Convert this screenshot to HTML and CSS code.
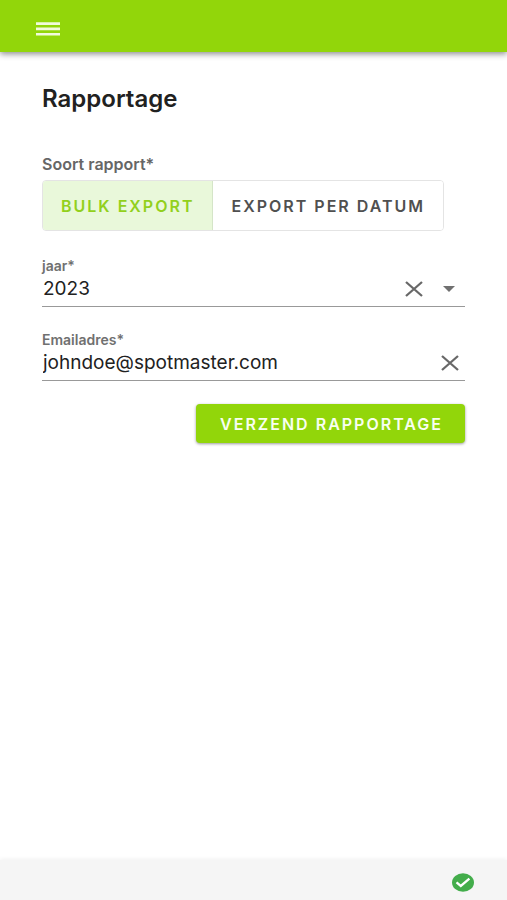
FILE: index.html
```html
<!DOCTYPE html>
<html lang="nl">
<head>
<meta charset="utf-8">
<meta name="viewport" content="width=device-width, initial-scale=1">
<title>Rapportage</title>
<link rel="stylesheet" href="styles.css">
</head>
<body>
<header class="topbar">
  <button class="icon-button" type="button" aria-label="Menu">
    <svg width="24" height="14" viewBox="0 0 24 14" aria-hidden="true"><path d="M0 1.6h24M0 6.9h24M0 12.2h24" stroke="#f1fbdc" stroke-width="2.6"/></svg>
  </button>
</header>
<main class="content">
  <h1 class="title">Rapportage</h1>
  <form class="form">
    <div class="group" role="group" aria-labelledby="kind">
      <span class="group-label" id="kind">Soort rapport*</span>
      <div class="toggle">
        <button class="toggle-item toggle-active" type="button" aria-pressed="true">BULK EXPORT</button>
        <button class="toggle-item" type="button" aria-pressed="false">EXPORT PER DATUM</button>
      </div>
    </div>
    <div class="field">
      <label class="field-label" for="year">jaar*</label>
      <div class="field-row">
        <select class="control" id="year"><option>2023</option></select>
        <button class="icon-button" type="button" aria-label="Jaar wissen">
          <svg width="18" height="16" viewBox="0 0 18 16" aria-hidden="true"><path d="M1 1l16 14M17 1L1 15" stroke="#686868" stroke-width="2.3"/></svg>
        </button>
        <svg class="arrow" width="12" height="6" viewBox="0 0 12 6" aria-hidden="true"><path d="M0 0h12L6 6z" fill="#707070"/></svg>
      </div>
    </div>
    <div class="field">
      <label class="field-label" for="email">Emailadres*</label>
      <div class="field-row">
        <input class="control" id="email" type="email" value="johndoe@spotmaster.com">
        <button class="icon-button" type="button" aria-label="Emailadres wissen">
          <svg width="18" height="16" viewBox="0 0 18 16" aria-hidden="true"><path d="M1 1l16 14M17 1L1 15" stroke="#686868" stroke-width="2.3"/></svg>
        </button>
      </div>
    </div>
    <button class="submit" type="submit">VERZEND RAPPORTAGE</button>
  </form>
</main>
<footer class="statusbar">
  <svg width="22" height="19" viewBox="0 0 22 19" role="img" aria-label="Verbonden"><ellipse cx="11" cy="9.5" rx="11" ry="9.3" fill="#43ad4b"/><path d="M4.5 9.3l4.3 3.6 8.6-7.2" fill="none" stroke="#fff" stroke-width="2.3"/></svg>
</footer>
</body>
</html>
```
FILE: styles.css
```css
* {
  box-sizing: border-box;
}

body {
  margin: 0;
  min-height: 100vh;
  display: flex;
  flex-direction: column;
  background: #fff;
  color: #212121;
  font-family: Inter, Roboto, sans-serif;
}

button {
  font-family: inherit;
  cursor: pointer;
}

.topbar {
  display: flex;
  align-items: center;
  height: 52px;
  padding: 5px 36px 0;
  background: #92d60a;
  box-shadow: 0 2px 6px rgba(0, 0, 0, 0.45);
}

.icon-button {
  display: flex;
  padding: 0;
  border: 0;
  background: none;
}

.content {
  flex: 1;
  padding: 33px 42px;
}

.title {
  margin: 0;
  font-size: 24px;
  line-height: 28px;
  font-weight: 600;
}

.form {
  display: flex;
  flex-direction: column;
  padding-top: 41px;
}

.group-label {
  display: block;
  margin-bottom: 6px;
  font-size: 16px;
  line-height: 20px;
  font-weight: 600;
  color: #666;
}

.toggle {
  display: inline-flex;
  border: 1px solid #e4e4e4;
  border-radius: 4px;
  overflow: hidden;
}

.toggle-item {
  height: 49px;
  padding: 0 18px;
  border: 0;
  background: #fff;
  color: #505050;
  font-size: 16px;
  font-weight: 600;
  letter-spacing: 2px;
  white-space: nowrap;
}

.toggle-active {
  border-right: 1px solid #d5e5c8;
  background: #e9f8da;
  color: #92d01c;
}

.field {
  padding-top: 25px;
}

.group + .field {
  padding-top: 27px;
}

.field-label {
  display: block;
  font-size: 14px;
  line-height: 16px;
  font-weight: 600;
  color: #707070;
}

.field-row {
  display: flex;
  align-items: center;
  height: 33px;
  padding: 0 6px 2px 0;
  border-bottom: 1px solid #999;
}

.control {
  flex: 1;
  min-width: 0;
  padding: 0 1px;
  border: 0;
  outline: 0;
  appearance: none;
  background: none;
  color: #212121;
  font: 19px/24px Inter, Roboto, sans-serif;
}

.arrow {
  margin: 0 4px 0 20px;
}

.submit {
  align-self: flex-end;
  height: 39px;
  margin-top: 23px;
  padding: 0 22px 0 24px;
  border: 0;
  border-radius: 4px;
  background: #92d60a;
  color: #f8fff0;
  font-size: 16px;
  font-weight: 600;
  letter-spacing: 2px;
  white-space: nowrap;
  box-shadow: 0 1px 3px rgba(0, 0, 0, 0.4);
}

.statusbar {
  display: flex;
  align-items: center;
  justify-content: flex-end;
  height: 40px;
  padding: 5px 33px 0;
  background: #f5f5f5;
  box-shadow: 0 -1px 4px rgba(0, 0, 0, 0.06);
}
```
